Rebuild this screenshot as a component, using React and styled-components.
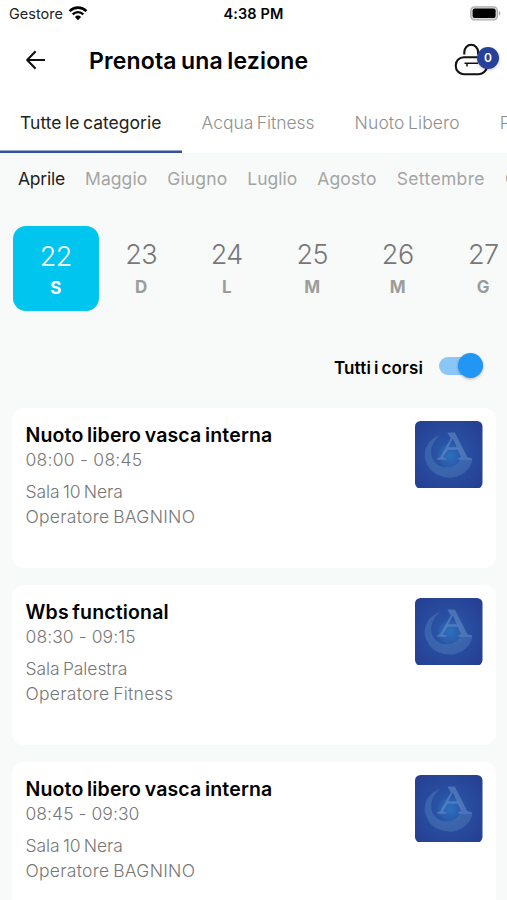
import React, { useState } from 'react';
import styled, { createGlobalStyle } from 'styled-components';

const months = [
  { name: 'Aprile', spacing: -0.22 },
  { name: 'Maggio', spacing: 0.08 },
  { name: 'Giugno', spacing: 0.12 },
  { name: 'Luglio', spacing: 0 },
  { name: 'Agosto', spacing: 0.15 },
  { name: 'Settembre', spacing: 0.35 },
  { name: 'Ottobre', spacing: 0 },
];

const categories = [
  { name: 'Tutte le categorie', spacing: 0.03 },
  { name: 'Acqua Fitness', spacing: -0.03 },
  { name: 'Nuoto Libero', spacing: 0.1 },
  { name: 'Palestra', spacing: 0 },
];

const days = [
  { number: 22, letter: 'S' },
  { number: 23, letter: 'D' },
  { number: 24, letter: 'L' },
  { number: 25, letter: 'M' },
  { number: 26, letter: 'M' },
  { number: 27, letter: 'G' },
];

const lessons = [
  {
    title: 'Nuoto libero vasca interna',
    time: '08:00 - 08:45',
    timeSpacing: 0.25,
    room: 'Sala 10 Nera',
    operator: 'Operatore BAGNINO',
  },
  {
    title: 'Wbs functional',
    time: '08:30 - 09:15',
    timeSpacing: 0.07,
    room: 'Sala Palestra',
    operator: 'Operatore Fitness',
  },
  {
    title: 'Nuoto libero vasca interna',
    time: '08:45 - 09:30',
    timeSpacing: 0.05,
    room: 'Sala 10 Nera',
    operator: 'Operatore BAGNINO',
  },
];

const WifiIcon = () => (
  <svg width="20" height="15" viewBox="0 0 20 15" fill="none">
    <path d="M1.6 5.1a11.9 11.9 0 0 1 16.8 0" stroke="#000" strokeWidth="2.6" />
    <path d="M4.7 8.4a7.5 7.5 0 0 1 10.6 0" stroke="#000" strokeWidth="2.3" />
    <path d="M10 14.2l-3.1-3.3a4.4 4.4 0 0 1 6.2 0z" fill="#000" />
  </svg>
);

const BatteryIcon = () => (
  <svg width="31" height="15" viewBox="0 0 31 15">
    <rect x="0.8" y="0.8" width="26.6" height="13" rx="3.8" fill="#ddd" stroke="#aaa" strokeWidth="1.3" />
    <rect x="2.6" y="2.5" width="23" height="9.6" rx="2" fill="#000" />
    <path d="M28.8 5v4.6c1.1-.4 1.6-1.2 1.6-2.3s-.5-1.9-1.6-2.3z" fill="#aaa" />
  </svg>
);

const BackIcon = () => (
  <svg width="20" height="20" viewBox="0 0 20 20" fill="none" stroke="#111" strokeWidth="2.1">
    <path d="M19 10H1.8M9.6 1.2L1.2 10l8.4 8.8" strokeLinejoin="round" />
  </svg>
);

const BagIcon = () => (
  <svg width="36" height="34" viewBox="0 0 36 34" fill="none" stroke="#111" strokeWidth="2.1">
    <path d="M10.3 11.5V9a6.9 7.2 0 0 1 13.8 0v2.5" />
    <rect x="1.8" y="14.2" width="31" height="17" rx="8" />
    <path d="M10.5 20.3h13.5M13 20.3v3.2" strokeWidth="1.5" />
  </svg>
);

const Logo = () => (
  <svg width="67.5" height="67.5" viewBox="0 0 67 67">
    <defs>
      <radialGradient id="glow" cx="50%" cy="50%" r="65%">
        <stop offset="0" stopColor="#2b5cac" />
        <stop offset="0.5" stopColor="#284c9f" />
        <stop offset="1" stopColor="#263f93" />
      </radialGradient>
      <radialGradient id="drop">
        <stop offset="0" stopColor="#2d7ac6" stopOpacity="0.7" />
        <stop offset="1" stopColor="#2d6ab8" stopOpacity="0.3" />
      </radialGradient>
    </defs>
    <rect width="67" height="67" rx="5.5" fill="url(#glow)" />
    <circle cx="35" cy="34" r="12" fill="url(#drop)" />
    <path
      d="M25 14C12 18 6 32 12 43c6 13 23 17 36 9 4-3 8-7 9-14H46c-3 3-6 8-14 8-10 0-16-7-16-15 0-7 4-13 9-17z"
      fill="#5583bd"
      opacity="0.42"
    />
    <path
      d="M32 11.5h7.5L52 36l4.5 1v1.5H43V37l3-1-3.5-7.500H32.500L27.500 36l3.500 1v1.500H22V37l3-1 10.500-19zM37.500 17.500L33 26h8.500z"
      fill="#7096cc"
      opacity="0.5"
      fillRule="evenodd"
    />
  </svg>
);

const App = () => {
  const [selected, setSelected] = useState(22);
  const [allCourses, setAllCourses] = useState(true);

  return (
    <Screen>
      <GlobalStyle />
      <StatusBar>
        <Carrier>
          Gestore <WifiIcon />
        </Carrier>
        <Clock>4:38 PM</Clock>
        <Battery>
          <BatteryIcon />
        </Battery>
      </StatusBar>
      <Header>
        <BackIcon />
        <Title>Prenota una lezione</Title>
        <Bag>
          <BagIcon />
          <Badge>0</Badge>
        </Bag>
      </Header>
      <Tabs>
        {categories.map((category, i) => (
          <Tab key={category.name} $active={i === 0} $spacing={category.spacing}>
            {category.name}
          </Tab>
        ))}
      </Tabs>
      <Months>
        {months.map((month, i) => (
          <Month key={month.name} $active={i === 0} $spacing={month.spacing}>
            {month.name}
          </Month>
        ))}
      </Months>
      <Days>
        {days.map((day) => (
          <Day
            key={day.number}
            $active={selected === day.number}
            onClick={() => setSelected(day.number)}
          >
            <span>{day.number}</span>
            <strong>{day.letter}</strong>
          </Day>
        ))}
      </Days>
      <Filter>
        <span>Tutti i corsi</span>
        <Toggle $on={allCourses} onClick={() => setAllCourses(!allCourses)} />
      </Filter>
      <Lessons>
        {lessons.map((lesson) => (
          <Card key={lesson.time}>
            <div>
              <h2>{lesson.title}</h2>
              <Time $spacing={lesson.timeSpacing}>{lesson.time}</Time>
              <Info $spacing={-0.08}>{lesson.room}</Info>
              <Info $spacing={0.28}>{lesson.operator}</Info>
            </div>
            <Logo />
          </Card>
        ))}
      </Lessons>
    </Screen>
  );
};

const GlobalStyle = createGlobalStyle`
  * {
    box-sizing: border-box;
    margin: 0;
    padding: 0;
  }
  body {
    overflow: hidden;
    font-family: Inter, 'Open Sans', sans-serif;
  }
  svg {
    display: block;
    flex-shrink: 0;
  }
`;

const Screen = styled.div`
  width: 507px;
  height: 900px;
  overflow: hidden;
  background-color: #f8faf9;
`;

const StatusBar = styled.div`
  display: grid;
  grid-template-columns: 1fr auto 1fr;
  align-items: center;
  height: 27px;
  padding: 0 6px 0 9px;
  background-color: white;
`;

const Carrier = styled.div`
  display: flex;
  align-items: center;
  gap: 5px;
  font-size: 14.5px;
  color: #222;
`;

const Clock = styled.div`
  margin-right: 3px;
  font-size: 14.5px;
  font-weight: 600;
  letter-spacing: 0.1px;
`;

const Battery = styled.div`
  display: flex;
  justify-content: flex-end;
`;

const Header = styled.header`
  display: flex;
  align-items: center;
  height: 65px;
  padding: 0 8px 0 26px;
  background-color: white;
`;

const Title = styled.h1`
  flex: 1;
  margin-left: 43px;
  padding-top: 2px;
  font-size: 23px;
  font-weight: 600;
  letter-spacing: 0.15px;
  word-spacing: -1.5px;
`;

const Bag = styled.div`
  position: relative;
  width: 45px;
`;

const Badge = styled.div`
  position: absolute;
  top: 4px;
  left: 23px;
  width: 22px;
  height: 22px;
  border-radius: 50%;
  background-color: #27419a;
  color: white;
  font-size: 12px;
  font-weight: 600;
  line-height: 22px;
  text-align: center;
  box-shadow: 0 1px 3px rgba(0, 0, 0, 0.25);
`;

const Tabs = styled.nav`
  display: flex;
  height: 60.5px;
  background-color: white;
`;

const Tab = styled.div`
  flex-shrink: 0;
  padding: 0 20px;
  font-size: 17.5px;
  font-weight: ${({ $active }) => ($active ? 400 : 300)};
  line-height: 62px;
  letter-spacing: ${({ $spacing }) => $spacing}px;
  word-spacing: -1.5px;
  color: ${({ $active }) => ($active ? '#222' : '#8f8f8f')};
  box-shadow: ${({ $active }) => ($active ? 'inset 0 -2.5px #3550a0' : 'none')};
`;

const Months = styled.div`
  display: flex;
  gap: 20px;
  height: 73px;
  padding: 13px 0 0 18px;
`;

const Month = styled.div`
  flex-shrink: 0;
  font-size: 17.5px;
  line-height: 26px;
  letter-spacing: ${({ $spacing }) => $spacing}px;
  color: ${({ $active }) => ($active ? '#1d1d1d' : '#a3a5a4')};
`;

const Days = styled.div`
  display: flex;
  padding-left: 13px;
`;

const Day = styled.div`
  flex-shrink: 0;
  display: flex;
  flex-direction: column;
  align-items: center;
  width: 85.5px;
  height: 85.5px;
  padding-top: ${({ $active }) => ($active ? 15 : 13)}px;
  border-radius: 13px;
  background-color: ${({ $active }) => ($active ? '#00c5ee' : 'transparent')};
  color: ${({ $active }) => ($active ? 'white' : '#777')};
  cursor: pointer;
  span {
    font-size: 27px;
    font-weight: 300;
    line-height: 32px;
    letter-spacing: -0.5px;
  }
  strong {
    font-size: 17px;
    line-height: ${({ $active }) => ($active ? 30 : 33)}px;
    color: ${({ $active }) => ($active ? 'white' : '#9b9c9c')};
  }
`;

const Filter = styled.div`
  display: flex;
  align-items: center;
  justify-content: flex-end;
  gap: 16px;
  height: 96.5px;
  padding: 17px 24px 0 0;
  font-size: 17px;
  font-weight: 600;
  letter-spacing: 0.15px;
  word-spacing: -1.5px;
`;

const Toggle = styled.div`
  position: relative;
  width: 44px;
  height: 18px;
  margin-top: -4px;
  border-radius: 9px;
  background-color: ${({ $on }) => ($on ? '#8ac7f8' : '#ccc')};
  cursor: pointer;
  &::after {
    content: '';
    position: absolute;
    top: -4px;
    left: ${({ $on }) => ($on ? 19 : 0)}px;
    width: 25px;
    height: 25px;
    border-radius: 50%;
    background-color: ${({ $on }) => ($on ? '#2196f3' : '#fff')};
    box-shadow: 0 1px 3px rgba(0, 0, 0, 0.3);
  }
`;

const Lessons = styled.div`
  display: flex;
  flex-direction: column;
  gap: 16.5px;
  padding: 0 11px 0 12px;
`;

const Card = styled.article`
  display: flex;
  justify-content: space-between;
  height: 160.5px;
  padding: 13px 13.5px 0 13.5px;
  border-radius: 12px;
  background-color: white;
  h2 {
    padding-top: 1px;
    font-size: 19.5px;
    font-weight: 600;
    line-height: 26px;
    letter-spacing: 0.16px;
    word-spacing: -1.5px;
  }
`;

const Info = styled.p`
  font-size: 17.5px;
  font-weight: 300;
  line-height: 24.5px;
  letter-spacing: ${({ $spacing }) => $spacing}px;
  word-spacing: -1.5px;
  color: #777;
`;

const Time = styled(Info)`
  padding-top: 0.5px;
  margin-bottom: 7.5px;
  word-spacing: 0;
`;

export default App;
